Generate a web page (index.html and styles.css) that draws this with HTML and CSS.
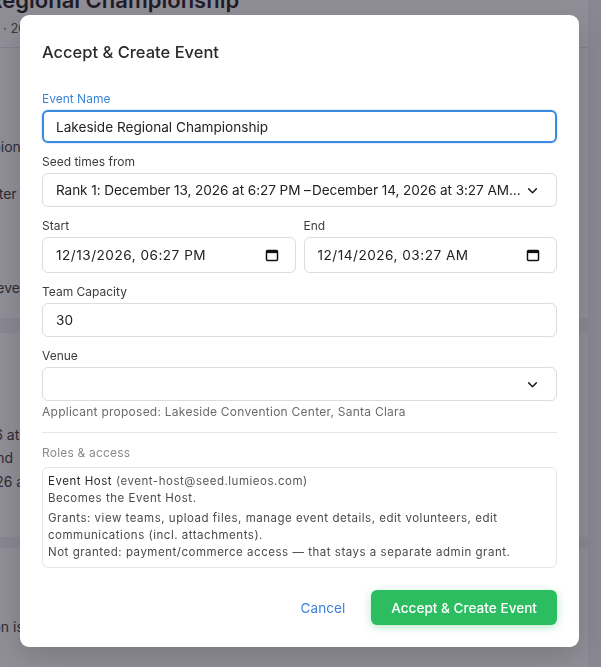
FILE: index.html
```html
<!DOCTYPE html>
<html lang="en">
<head>
<meta charset="utf-8">
<title>Accept &amp; Create Event</title>
<link rel="stylesheet" href="styles.css">
</head>
<body>
<div class="page">
  <header class="page-head">
    <h1 class="page-title">Lakeside Regional Championship</h1>
    <div class="page-sub">Dec 13 · 2026-12-13 to 2026-12-14</div>
  </header>
  <section class="card card-first">
    <div class="bg-row">Lakeside Regional Championship</div>
    <div class="bg-row">Lakeside Convention Center</div>
    <div class="bg-row bg-row-late">Capacity: 30 teams · per event</div>
  </section>
  <section class="card card-second">
    <div class="bg-row">Open: December 13, 2026 at 6:27 PM</div>
    <div class="bg-row">Ranks 1 through Rank 3 and</div>
    <div class="bg-row">Closes: December 14, 2026 at 3:27 AM</div>
  </section>
  <section class="card card-third">
    <div class="bg-row">Lakeside's host application is pending review</div>
  </section>
</div>

<div class="overlay">
  <div class="modal" role="dialog" aria-labelledby="modal-title">
    <h2 class="modal-title" id="modal-title">Accept &amp; Create Event</h2>

    <div class="field">
      <label class="label label-active" for="event-name">Event Name</label>
      <input class="control control-focus" id="event-name" type="text" value="Lakeside Regional Championship">
    </div>

    <div class="field">
      <label class="label" for="seed">Seed times from</label>
      <div class="select-wrap">
        <div class="control select-face" id="seed">Rank 1: December 13, 2026 at 6:27 PM &#8211;&#8202;December 14, 2026 at 3:27 AM&#8230;</div>
        <svg class="chevron" viewBox="0 0 12 12" aria-hidden="true"><path d="M2.5 4.5 6 8l3.5-3.5" fill="none" stroke="#222" stroke-width="1.4" stroke-linecap="round" stroke-linejoin="round"/></svg>
      </div>
    </div>

    <div class="field field-row">
      <div class="col">
        <label class="label" for="start">Start</label>
        <div class="control date-face" id="start">
          <span>12/13/2026, 06:27 PM</span>
          <svg class="cal" viewBox="0 0 14 14" aria-hidden="true"><rect x="1.5" y="2.5" width="11" height="10" rx="1" fill="none" stroke="#111" stroke-width="1.5"/><rect x="1.5" y="2.5" width="11" height="2.6" fill="#111"/></svg>
        </div>
      </div>
      <div class="col">
        <label class="label" for="end">End</label>
        <div class="control date-face" id="end">
          <span>12/14/2026, 03:27 AM</span>
          <svg class="cal" viewBox="0 0 14 14" aria-hidden="true"><rect x="1.5" y="2.5" width="11" height="10" rx="1" fill="none" stroke="#111" stroke-width="1.5"/><rect x="1.5" y="2.5" width="11" height="2.6" fill="#111"/></svg>
        </div>
      </div>
    </div>

    <div class="field">
      <label class="label" for="capacity">Team Capacity</label>
      <input class="control" id="capacity" type="text" value="30">
    </div>

    <div class="field field-venue">
      <label class="label" for="venue">Venue</label>
      <div class="select-wrap">
        <div class="control select-face" id="venue"></div>
        <svg class="chevron" viewBox="0 0 12 12" aria-hidden="true"><path d="M2.5 4.5 6 8l3.5-3.5" fill="none" stroke="#222" stroke-width="1.4" stroke-linecap="round" stroke-linejoin="round"/></svg>
      </div>
      <div class="helper">Applicant proposed: Lakeside Convention Center, Santa Clara</div>
    </div>

    <hr class="divider">

    <div class="section-label">Roles &amp; access</div>
    <div class="roles">
      <div class="role-line"><span class="role-name">Event Host</span> <span class="role-mail">(event-host@seed.lumieos.com)</span></div>
      <div class="role-line">Becomes the Event Host.</div>
      <div class="role-grants">
        <p class="role-p">Grants: view teams, upload files, manage event details, edit volunteers, edit communications (incl. attachments).</p>
        <p class="role-p">Not granted: payment/commerce access — that stays a separate admin grant.</p>
      </div>
    </div>

    <div class="actions">
      <button class="btn-link" type="button">Cancel</button>
      <button class="btn-primary" type="button">Accept &amp; Create Event</button>
    </div>
  </div>
</div>
</body>
</html>
```

FILE: styles.css
```css
* { box-sizing: border-box; }

html, body {
  margin: 0;
  padding: 0;
  width: 601px;
  height: 667px;
  overflow: hidden;
}

body {
  font-family: Inter, "Noto Sans", "Liberation Sans", sans-serif;
  background: #f1f1f4;
  color: #2b2b2b;
}

/* background page */
.page {
  margin-left: -112px;
  width: 700px;
  overflow: hidden;
}

.page-head {
  display: flow-root;
  background: #ffffff;
  height: 48px;
  border-bottom: 1px solid #e4e4ea;
}

.page-title {
  margin: -14px 0 0 0;
  font-size: 22px;
  line-height: 28px;
  font-weight: 600;
  color: #1f1d26;
  white-space: nowrap;
}

.page-sub {
  margin: 6px 0 0 70px;
  font-size: 13px;
  line-height: 16px;
  color: #555;
  white-space: nowrap;
}

.card {
  background: #ffffff;
  display: flow-root;
}

.card-first {
  height: 270px;
  padding-top: 88px;
  margin-bottom: 15px;
}

.card-second {
  height: 204px;
  padding-top: 91px;
  margin-bottom: 11px;
}

.card-third {
  height: 200px;
  padding-top: 68px;
}

.bg-row {
  font-size: 14px;
  line-height: 22px;
  color: #3a3a3a;
  margin: 0 0 25px -58px;
  white-space: nowrap;
}

.card-second .bg-row { margin-bottom: 1px; }
.card-second .bg-row:nth-child(2) { margin-bottom: 2px; }
.bg-row-late { margin-top: 72px; }

/* overlay & modal */
.overlay {
  position: fixed;
  inset: 0;
  background: rgba(33, 29, 46, 0.5);
  display: flex;
  justify-content: flex-start;
  align-items: flex-start;
  padding: 15px 0 0 20px;
}

.modal {
  width: 559px;
  background: #ffffff;
  border-radius: 9px;
  padding: 27px 22px 22px;
  box-shadow: 0 10px 30px rgba(0, 0, 0, 0.15);
}

.modal-title {
  margin: 0 0 29px;
  font-size: 16.5px;
  line-height: 20px;
  font-weight: 500;
  color: #2a2a2a;
}

.field {
  margin-bottom: 11px;
}

.field-row {
  display: flex;
  gap: 8px;
}

.col { flex: 1; }

.label {
  display: block;
  font-size: 12px;
  line-height: 16px;
  color: #3c3c3c;
  margin-bottom: 3px;
}

.label-active {
  color: #3b86d8;
}

.control {
  display: block;
  width: 100%;
  height: 34px;
  border: 1px solid #dcdcdc;
  border-radius: 6px;
  background: #ffffff;
  font-family: inherit;
  font-size: 13.6px;
  color: #222;
  padding: 0 12px 0 13px;
  outline: none;
  line-height: 32px;
}

.control-focus {
  height: 33px;
  border: 2px solid #3b8ae0;
  padding-left: 12px;
  box-shadow: 0 0 0 1px rgba(59, 138, 224, 0.15);
}

.select-wrap {
  position: relative;
}

.select-face {
  padding-right: 28px;
  white-space: nowrap;
  overflow: hidden;
  letter-spacing: -0.08px;
}

.chevron {
  position: absolute;
  right: 18px;
  top: 11px;
  width: 13px;
  height: 13px;
}

.date-face {
  display: flex;
  align-items: center;
  justify-content: space-between;
  height: 36px;
  padding-right: 16px;
  letter-spacing: 0.5px;
}

.cal {
  width: 14px;
  height: 14px;
}

.field-venue {
  margin-bottom: 0;
}

.helper {
  margin-top: 3px;
  font-size: 12px;
  line-height: 16px;
  color: #6a6a6a;
  letter-spacing: 0.25px;
}

.divider {
  border: 0;
  border-top: 1px solid #e6e6e6;
  margin: 12px 0 12px;
}

.section-label {
  font-size: 12px;
  line-height: 16px;
  color: #8a8a8a;
  letter-spacing: 0.2px;
  margin-bottom: 6px;
}

.roles {
  border: 1px solid #e6e6e6;
  border-radius: 6px;
  padding: 5px 5px 6px;
  font-size: 11.5px;
  line-height: 17px;
  color: #4a4a4a;
  letter-spacing: 0.52px;
}

.role-name {
  color: #2a2a2a;
}

.role-mail {
  color: #555;
}

.role-grants {
  margin-top: 3px;
}

.role-p {
  margin: 0;
}

.actions {
  display: flex;
  justify-content: flex-end;
  align-items: center;
  gap: 10px;
  margin-top: 22px;
}

.btn-link {
  border: 0;
  background: none;
  font-family: inherit;
  font-size: 13.6px;
  color: #3b82d6;
  padding: 8px 16px;
  cursor: pointer;
}

.btn-primary {
  border: 0;
  background: #2dbd61;
  color: #ffffff;
  font-family: inherit;
  font-size: 13.6px;
  font-weight: 500;
  height: 35px;
  padding: 0 20px;
  border-radius: 6px;
  box-shadow: 0 2px 8px rgba(45, 189, 97, 0.35);
  cursor: pointer;
}
```
